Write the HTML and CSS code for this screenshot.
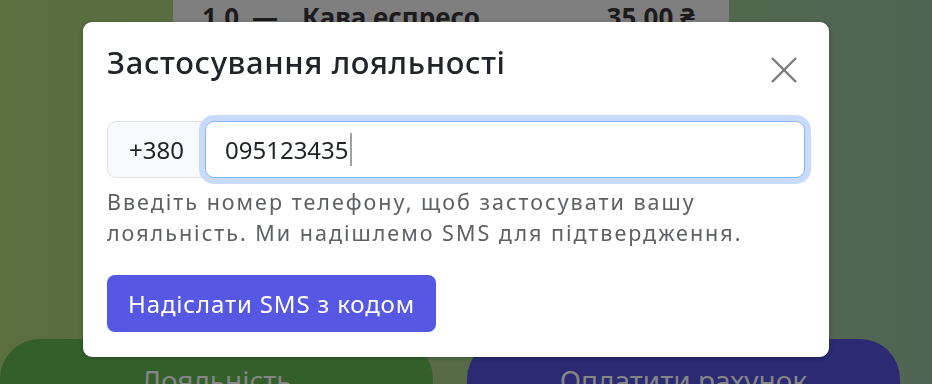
FILE: index.html
```html
<!DOCTYPE html>
<html lang="uk">
<head>
<meta charset="utf-8">
<title>Застосування лояльності</title>
<link rel="stylesheet" href="styles.css">
</head>
<body>
<div class="page">
  <main class="receipt-area">
    <div class="receipt">
      <div class="receipt-line">
        <span class="qty">1.0</span>
        <span class="dash">—</span>
        <span class="item">Кава еспресо</span>
        <span class="price">35.00 ₴</span>
      </div>
    </div>
  </main>
  <footer class="actions">
    <button class="action action-loyalty" type="button">Лояльність</button>
    <button class="action action-pay" type="button">Оплатити рахунок</button>
  </footer>
</div>

<div class="backdrop">
  <div class="modal" role="dialog" aria-labelledby="modal-title">
    <div class="modal-header">
      <h5 class="modal-title" id="modal-title">Застосування лояльності</h5>
      <button class="btn-close" type="button" aria-label="Закрити">
        <svg viewBox="0 0 28 28" width="28" height="28" aria-hidden="true">
          <path d="M2 2 L26 26 M26 2 L2 26" fill="none" stroke="#7b7b7b" stroke-width="2.4" stroke-linecap="butt"/>
        </svg>
      </button>
    </div>
    <div class="modal-body">
      <div class="input-group">
        <span class="input-prefix">+380</span>
        <div class="phone-input"><span class="phone-value">095123435</span><span class="caret"></span></div>
      </div>
      <p class="help-text">Введіть номер телефону, щоб застосувати вашу лояльність. Ми надішлемо SMS для підтвердження.</p>
      <button class="btn-primary" type="button">Надіслати SMS з кодом</button>
    </div>
  </div>
</div>
</body>
</html>
```

FILE: styles.css
```css
* {
  box-sizing: border-box;
}

html, body {
  margin: 0;
  padding: 0;
}

body {
  width: 932px;
  height: 384px;
  overflow: hidden;
  font-family: "Noto Sans", "DejaVu Sans", sans-serif;
  background: linear-gradient(90deg, #5b6e3e 0%, #566b47 50%, #4f6553 100%);
}

.page {
  display: grid;
  grid-template-rows: 339px 90px;
  height: 384px;
}

.receipt-area {
  display: flex;
  padding-left: 173px;
}

.receipt {
  width: 556px;
  background: #7f7f7f;
  padding: 0 34px 0 29px;
}

.receipt-line {
  display: flex;
  align-items: baseline;
  font-weight: 700;
  font-size: 26px;
  line-height: 36px;
  color: #1c1c1c;
  margin-top: -1px;
}

.qty {
  width: 50px;
}

.dash {
  width: 50px;
}

.item {
  flex: 1;
}

.actions {
  display: flex;
  gap: 34px;
  padding-right: 32px;
}

.action {
  flex: 1;
  border: 0;
  height: 90px;
  border-radius: 40px;
  font-family: "Noto Sans", sans-serif;
  font-size: 28px;
  color: #858585;
  padding-top: 22px;
  text-align: center;
  align-self: start;
  display: flex;
  justify-content: center;
  align-items: flex-start;
}

.action-loyalty {
  background: #33602a;
}

.action-pay {
  background: #2b2a72;
}

.backdrop {
  position: fixed;
  inset: 0;
  padding: 22px 0 0 83px;
}

.modal {
  width: 746px;
  background: #ffffff;
  border-radius: 9px;
  padding: 22px 24px 25px 24px;
  box-shadow: 0 1px 4px rgba(0, 0, 0, 0.25);
}

.modal-header {
  display: flex;
  justify-content: space-between;
  align-items: flex-start;
}

.modal-title {
  margin: 0;
  font-size: 31px;
  line-height: 37px;
  font-weight: 500;
  color: #212529;
  letter-spacing: 0.02em;
}

.btn-close {
  border: 0;
  background: transparent;
  padding: 0;
  margin: 12px 7px 0 0;
  width: 28px;
  height: 28px;
  display: flex;
}

.modal-body {
  padding-top: 37px;
}

.input-group {
  display: flex;
  height: 57px;
}

.input-prefix {
  width: 98px;
  display: flex;
  align-items: center;
  justify-content: center;
  background: #f8f9fa;
  border: 1px solid #dee2e6;
  border-right: 0;
  border-radius: 9px 0 0 9px;
  font-size: 24px;
  color: #212529;
}

.phone-input {
  flex: 1;
  display: flex;
  align-items: center;
  padding-left: 19px;
  border: 1px solid #86b7fe;
  border-radius: 9px;
  box-shadow: 0 0 0 6px #c9dbfc;
  font-size: 24px;
  color: #212529;
  position: relative;
  z-index: 1;
  background: #ffffff;
}

.caret {
  display: inline-block;
  width: 2px;
  height: 33px;
  background: #a0a0a0;
  margin-left: 1px;
}

.help-text {
  margin: 8px 0 0 0;
  font-size: 21.5px;
  line-height: 31px;
  color: #5e6063;
  letter-spacing: 2px;
}

.btn-primary {
  margin-top: 27px;
  height: 57px;
  padding: 0 21px;
  border: 0;
  border-radius: 8px;
  background: #5658e4;
  color: #ffffff;
  font-family: "Noto Sans", sans-serif;
  font-size: 24px;
  letter-spacing: 0.85px;
}
```
